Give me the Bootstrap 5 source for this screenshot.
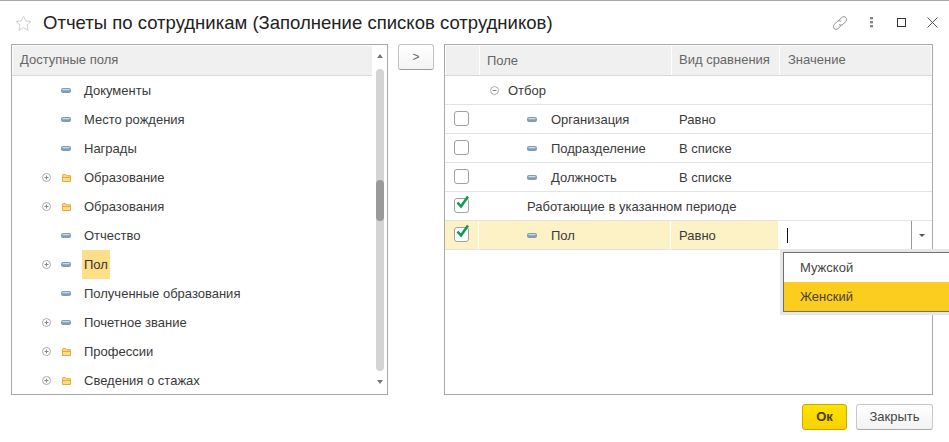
<!DOCTYPE html>
<html lang="ru">
<head>
<meta charset="UTF-8" />
<meta name="viewport" content="width=device-width, initial-scale=1" />
<title>Отчеты по сотрудникам</title>
<link href="https://cdn.jsdelivr.net/npm/bootstrap@5.3.0/dist/css/bootstrap.min.css" rel="stylesheet">
<style>
  html, body { height: 442px; overflow: hidden; }
  body { font-family: "Liberation Sans", Arial, sans-serif; font-size: 13px; color: #3a3a3a; background: #fff; }
  .dlg { width: 949px; height: 442px; border-top: 1px solid #a8a8a8; position: relative; overflow: hidden; }
  .dlg-head { height: 43px; padding: 0 11px 0 15px; }
  .dlg-title { font-size: 18.55px; color: #222; margin-left: 11px; flex-grow: 1; line-height: 43px; }
  .head-ico { display: block; }
  .dlg-body { padding: 0 16px 0 11px; height: 351px; }
  .panel-box { border: 1px solid #a8a8a8; height: 351px; }
  .panel-left { width: 377px; }
  .panel-right { width: 489px; position: relative; }
  .mid-col { width: 56px; }
  .arrow-btn { width: 36px; height: 26px; margin: 0 auto; padding: 0; border: 1px solid #c4c4c4; border-bottom-color: #9a9a9a; border-radius: 3px; background: linear-gradient(#fff, #f4f4f4); color: #666; font-size: 12px; line-height: 22px; }
  .tree-main { flex-grow: 1; min-width: 0; overflow: hidden; }
  .col-head { height: 29px; margin: 1px 0 0 1px; background: #f0f0f0; color: #666; line-height: 28px; padding-left: 7px; }
  .head-line { height: 1px; background: #d9d9d9; }
  .tree-row { height: 29px; line-height: 29px; display: flex; align-items: center; white-space: nowrap; }
  .slot-plus { width: 28px; margin-left: 20px; flex: none; display: flex; justify-content: center; }
  .slot-ico { width: 12px; flex: none; display: flex; justify-content: center; margin-right: 12px; }
  .pick-mark { background: #fddf8a; padding: 0 2px; margin-left: -2px; color: #333; }
  .scroll-col { width: 16px; flex: none; display: flex; flex-direction: column; align-items: center; margin-right: -1px; }
  .scroll-up, .scroll-down { height: 0; width: 0; border-left: 3px solid transparent; border-right: 3px solid transparent; }
  .scroll-up { border-bottom: 4px solid #777; margin-top: 9px; margin-bottom: 11px; }
  .scroll-down { border-top: 4px solid #777; margin-top: 9px; }
  .scroll-track { width: 8px; height: 302px; background: #d4d4d4; border-radius: 4px; display: flex; flex-direction: column; padding-top: 111px; }
  .scroll-thumb { width: 8px; height: 41px; background: #9a9a9a; border-radius: 4px; }
  .grid-row { display: flex; height: 29px; align-items: stretch; border-bottom: 1px solid #e3e3e3; line-height: 29px; white-space: nowrap; }
  .grid-head { margin: 1px 1px 0 1px; height: 29px; border-bottom: 0; background: #f0f0f0; color: #666; }
  .cell-check { width: 33px; flex: none; display: flex; justify-content: center; align-items: center; padding-bottom: 2px; }
  .cell-field { width: 192px; flex: none; display: flex; align-items: center; }
  .cell-kind { width: 108px; flex: none; padding-left: 9px; }
  .cell-val { flex-grow: 1; position: relative; padding-left: 8px; }
  .grid-head > div { border-left: 1px solid #fff; padding-left: 7px; line-height: 28px; }
  .grid-head > div:first-child { border-left: 0; }
  .grid-head > .cell-val { padding-left: 8px; }
  .chk-box { width: 15px; height: 15px; border: 1px solid #a0a0a0; border-radius: 3px; background: #fff; position: relative; display: block; }
  .chk-box svg { position: absolute; left: 0; top: -4px; }
  .sel-row > .cell-check, .sel-row > .cell-field, .sel-row > .cell-kind { background: #fdf2c6; border-left: 1px solid #fff; }
  .sel-row > .cell-check { border-left: 0; }
  .sel-row > .cell-kind { padding-left: 8px; }
  .inp-box { display: flex; height: 28px; }
  .caret-bar { width: 1px; height: 15px; background: #111; margin: 7px 0 0 1px; }
  .drop-btn { margin-left: auto; width: 21px; border-left: 1px solid #999; display: flex; align-items: center; justify-content: center; }
  .drop-arrow { width: 0; height: 0; border-left: 3px solid transparent; border-right: 3px solid transparent; border-top: 3px solid #555; }
  .pop-list { position: absolute; left: 783px; top: 251px; width: 170px; border: 1px solid #707070; background: #fff; box-shadow: 0 0 0 3px #e6e6e6; }
  .pop-item { height: 29px; line-height: 29px; padding-left: 16px; color: #444; }
  .pop-item.cur { background: #fbcd1f; color: #4b4220; }
  .dlg-foot { padding: 9px 16px 0 0; gap: 9px; }
  .btn-ok { width: 45px; height: 26px; padding: 0; font-size: 13px; font-weight: 700; color: #4a4000; border: 1px solid #c9a800; border-radius: 3px; background: linear-gradient(#fde200, #f9d100); line-height: 24px; }
  .btn-close1c { width: 77px; height: 26px; padding: 0; font-size: 13px; color: #444; border: 1px solid #c8c8c8; border-bottom-color: #aaa; border-radius: 3px; background: linear-gradient(#fff, #f2f2f2); line-height: 24px; }
</style>
</head>
<body>
<svg width="0" height="0" class="position-absolute">
  <symbol id="i-field" viewBox="0 0 10 5"><rect x="0" y="0" width="10" height="5" rx="2" fill="#7f9db6"/><rect x="1.5" y="1" width="7" height="1.3" fill="#c9d9e6"/></symbol>
  <symbol id="i-folder" viewBox="0 0 9 8"><path d="M.5 7.5V1L1 .5h2.4l.8 1.2h4.3v5.8z" fill="#fbdc8c" stroke="#e3aa3c"/><path d="M1 3.5h7" stroke="#e3aa3c"/></symbol>
  <symbol id="i-plus" viewBox="0 0 9 9"><circle cx="4.5" cy="4.5" r="4" fill="none" stroke="#aaa"/><path d="M2.5 4.5h4M4.5 2.5v4" stroke="#888"/></symbol>
  <symbol id="i-minus" viewBox="0 0 9 9"><circle cx="4.5" cy="4.5" r="4" fill="none" stroke="#aaa"/><path d="M2.5 4.5h4" stroke="#888"/></symbol>
  <symbol id="i-check" viewBox="0 0 15 15"><path d="M2.5 7.5l3.5 4 7-10" fill="none" stroke="#109a5a" stroke-width="2.6"/></symbol>
</svg>

<div class="dlg">
  <div class="dlg-head d-flex align-items-center">
    <svg class="head-ico" width="17" height="16" viewBox="0 0 17 16"><path d="M8.5 1l2.2 4.9 5.3.6-4 3.6 1.1 5.2-4.6-2.7-4.6 2.7 1.1-5.2-4-3.6 5.3-.6z" fill="none" stroke="#cfcfcf"/></svg>
    <div class="dlg-title">Отчеты по сотрудникам (Заполнение списков сотрудников)</div>
    <div class="d-flex align-items-center">
      <svg class="head-ico" width="16" height="16" viewBox="0 0 16 16" fill="none" stroke="#8a8a8a"><path d="M7.2 5.2l2.3-2.5c1.3-1.3 3.3-1.3 4.3-.2s1 2.9-.2 4.2l-2.5 2.5c-1.3 1.3-3 1.3-4.100.3M8.800 10.800l-2.300 2.500c-1.300 1.300-3.300 1.300-4.300.2s-1-2.900.2-4.200l2.500-2.500c1.300-1.300 3-1.300 4.100-.3"/></svg>
      <svg class="head-ico" style="margin-left:22px" width="3" height="11" viewBox="0 0 3 11" fill="#888"><rect x="0" y="0" width="3" height="2.4"/><rect x="0" y="4" width="3" height="2.4"/><rect x="0" y="8" width="3" height="2.4"/></svg>
      <svg class="head-ico" style="margin-left:24px" width="9" height="9" viewBox="0 0 9 9"><rect x=".5" y=".5" width="8" height="8" fill="none" stroke="#333"/></svg>
      <svg class="head-ico" style="margin-left:21px" width="11" height="11" viewBox="0 0 11 11"><path d="M.5.5l10 10M10.500.5l-10 10" stroke="#555" fill="none"/></svg>
    </div>
  </div>

  <div class="dlg-body d-flex">
    <div class="panel-box panel-left d-flex">
      <div class="tree-main">
        <div class="col-head">Доступные поля</div>
        <div class="head-line"></div>
        <div class="tree-row"><span class="slot-plus"></span><span class="slot-ico"><svg width="10" height="5"><use href="#i-field"/></svg></span><span>Документы</span></div>
        <div class="tree-row"><span class="slot-plus"></span><span class="slot-ico"><svg width="10" height="5"><use href="#i-field"/></svg></span><span>Место рождения</span></div>
        <div class="tree-row"><span class="slot-plus"></span><span class="slot-ico"><svg width="10" height="5"><use href="#i-field"/></svg></span><span>Награды</span></div>
        <div class="tree-row"><span class="slot-plus"><svg width="9" height="9"><use href="#i-plus"/></svg></span><span class="slot-ico"><svg width="9" height="8"><use href="#i-folder"/></svg></span><span>Образование</span></div>
        <div class="tree-row"><span class="slot-plus"><svg width="9" height="9"><use href="#i-plus"/></svg></span><span class="slot-ico"><svg width="9" height="8"><use href="#i-folder"/></svg></span><span>Образования</span></div>
        <div class="tree-row"><span class="slot-plus"></span><span class="slot-ico"><svg width="10" height="5"><use href="#i-field"/></svg></span><span>Отчество</span></div>
        <div class="tree-row"><span class="slot-plus"><svg width="9" height="9"><use href="#i-plus"/></svg></span><span class="slot-ico"><svg width="10" height="5"><use href="#i-field"/></svg></span><span class="pick-mark">Пол</span></div>
        <div class="tree-row"><span class="slot-plus"></span><span class="slot-ico"><svg width="10" height="5"><use href="#i-field"/></svg></span><span>Полученные образования</span></div>
        <div class="tree-row"><span class="slot-plus"><svg width="9" height="9"><use href="#i-plus"/></svg></span><span class="slot-ico"><svg width="10" height="5"><use href="#i-field"/></svg></span><span>Почетное звание</span></div>
        <div class="tree-row"><span class="slot-plus"><svg width="9" height="9"><use href="#i-plus"/></svg></span><span class="slot-ico"><svg width="9" height="8"><use href="#i-folder"/></svg></span><span>Профессии</span></div>
        <div class="tree-row"><span class="slot-plus"><svg width="9" height="9"><use href="#i-plus"/></svg></span><span class="slot-ico"><svg width="9" height="8"><use href="#i-folder"/></svg></span><span>Сведения о стажах</span></div>
      </div>
      <div class="scroll-col">
        <div class="scroll-up"></div>
        <div class="scroll-track"><div class="scroll-thumb"></div></div>
        <div class="scroll-down"></div>
      </div>
    </div>

    <div class="mid-col"><button type="button" class="btn arrow-btn d-block">&gt;</button></div>

    <div class="panel-box panel-right">
      <div class="grid-row grid-head">
        <div class="cell-check"></div>
        <div class="cell-field">Поле</div>
        <div class="cell-kind">Вид сравнения</div>
        <div class="cell-val">Значение</div>
      </div>
      <div class="head-line"></div>
      <div class="grid-row">
        <div class="cell-check"></div>
        <div class="cell-field" style="padding-left:12px"><svg width="9" height="9"><use href="#i-minus"/></svg><span style="margin-left:9px">Отбор</span></div>
      </div>
      <div class="grid-row">
        <div class="cell-check"><span class="chk-box"></span></div>
        <div class="cell-field" style="padding-left:49px"><svg width="10" height="5"><use href="#i-field"/></svg><span style="margin-left:14px">Организация</span></div>
        <div class="cell-kind">Равно</div>
      </div>
      <div class="grid-row">
        <div class="cell-check"><span class="chk-box"></span></div>
        <div class="cell-field" style="padding-left:49px"><svg width="10" height="5"><use href="#i-field"/></svg><span style="margin-left:14px">Подразделение</span></div>
        <div class="cell-kind">В списке</div>
      </div>
      <div class="grid-row">
        <div class="cell-check"><span class="chk-box"></span></div>
        <div class="cell-field" style="padding-left:49px"><svg width="10" height="5"><use href="#i-field"/></svg><span style="margin-left:14px">Должность</span></div>
        <div class="cell-kind">В списке</div>
      </div>
      <div class="grid-row">
        <div class="cell-check"><span class="chk-box"><svg width="15" height="15"><use href="#i-check"/></svg></span></div>
        <div class="cell-field" style="padding-left:49px">Работающие в указанном периоде</div>
      </div>
      <div class="grid-row sel-row">
        <div class="cell-check"><span class="chk-box"><svg width="15" height="15"><use href="#i-check"/></svg></span></div>
        <div class="cell-field" style="padding-left:48px"><svg width="10" height="5"><use href="#i-field"/></svg><span style="margin-left:14px">Пол</span></div>
        <div class="cell-kind">Равно</div>
        <div class="cell-val"><div class="inp-box"><span class="caret-bar"></span><span class="drop-btn"><span class="drop-arrow"></span></span></div></div>
      </div>
    </div>
  </div>

  <div class="dlg-foot d-flex justify-content-end">
    <button type="button" class="btn btn-ok">Ок</button>
    <button type="button" class="btn btn-close1c">Закрыть</button>
  </div>

  <div class="pop-list">
    <div class="pop-item">Мужской</div>
    <div class="pop-item cur">Женский</div>
  </div>
</div>
<script src="https://cdn.jsdelivr.net/npm/bootstrap@5.3.0/dist/js/bootstrap.bundle.min.js"></script>
</body>
</html>
